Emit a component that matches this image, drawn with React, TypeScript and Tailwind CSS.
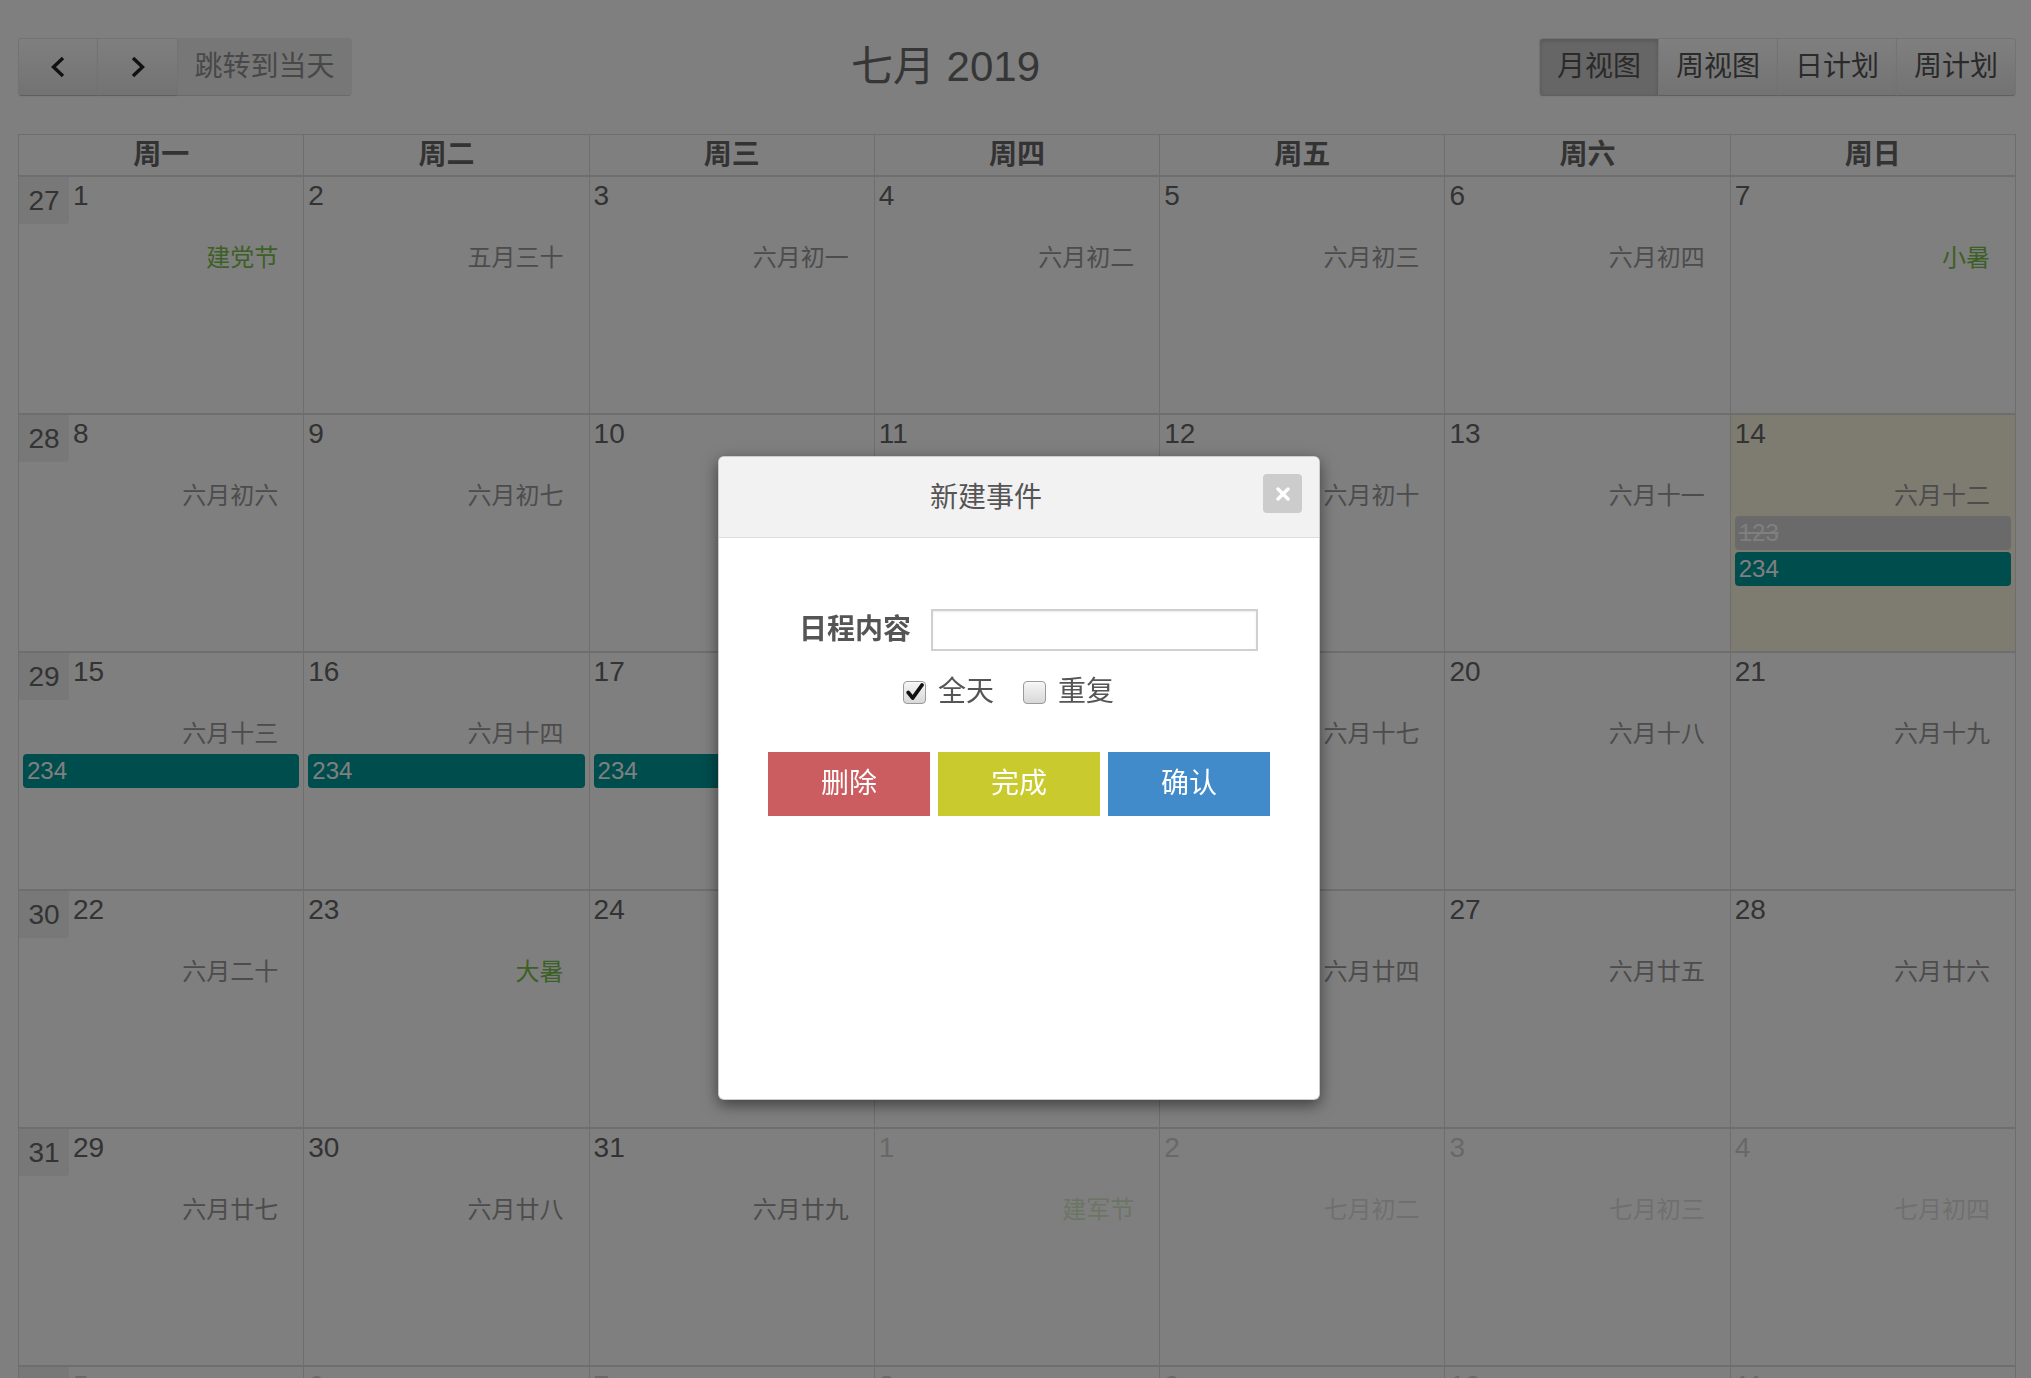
import React from "react";

type Ev = { title: string; done?: boolean };
type Day = {
  d: number;
  lunar: string;
  holiday?: boolean;
  other?: boolean;
  today?: boolean;
  events?: Ev[];
};

const weeks: { wk: number; days: Day[] }[] = [
  {
    wk: 27,
    days: [
      { d: 1, lunar: "建党节", holiday: true },
      { d: 2, lunar: "五月三十" },
      { d: 3, lunar: "六月初一" },
      { d: 4, lunar: "六月初二" },
      { d: 5, lunar: "六月初三" },
      { d: 6, lunar: "六月初四" },
      { d: 7, lunar: "小暑", holiday: true },
    ],
  },
  {
    wk: 28,
    days: [
      { d: 8, lunar: "六月初六" },
      { d: 9, lunar: "六月初七" },
      { d: 10, lunar: "六月初八" },
      { d: 11, lunar: "六月初九" },
      { d: 12, lunar: "六月初十" },
      { d: 13, lunar: "六月十一" },
      {
        d: 14,
        lunar: "六月十二",
        today: true,
        events: [{ title: "123", done: true }, { title: "234" }],
      },
    ],
  },
  {
    wk: 29,
    days: [
      { d: 15, lunar: "六月十三", events: [{ title: "234" }] },
      { d: 16, lunar: "六月十四", events: [{ title: "234" }] },
      { d: 17, lunar: "六月十五", events: [{ title: "234" }] },
      { d: 18, lunar: "六月十六" },
      { d: 19, lunar: "六月十七" },
      { d: 20, lunar: "六月十八" },
      { d: 21, lunar: "六月十九" },
    ],
  },
  {
    wk: 30,
    days: [
      { d: 22, lunar: "六月二十" },
      { d: 23, lunar: "大暑", holiday: true },
      { d: 24, lunar: "六月廿二" },
      { d: 25, lunar: "六月廿三" },
      { d: 26, lunar: "六月廿四" },
      { d: 27, lunar: "六月廿五" },
      { d: 28, lunar: "六月廿六" },
    ],
  },
  {
    wk: 31,
    days: [
      { d: 29, lunar: "六月廿七" },
      { d: 30, lunar: "六月廿八" },
      { d: 31, lunar: "六月廿九" },
      { d: 1, lunar: "建军节", holiday: true, other: true },
      { d: 2, lunar: "七月初二", other: true },
      { d: 3, lunar: "七月初三", other: true },
      { d: 4, lunar: "七月初四", other: true },
    ],
  },
  {
    wk: 32,
    days: [
      { d: 5, lunar: "七月初五", other: true },
      { d: 6, lunar: "七月初六", other: true },
      { d: 7, lunar: "七夕", holiday: true, other: true },
      { d: 8, lunar: "立秋", holiday: true, other: true },
      { d: 9, lunar: "七月初九", other: true },
      { d: 10, lunar: "七月初十", other: true },
      { d: 11, lunar: "七月十一", other: true },
    ],
  },
];

const dayNames = ["周一", "周二", "周三", "周四", "周五", "周六", "周日"];

const btnBase =
  "flex h-[58px] items-center justify-center border border-[#e6e6e6] border-b-[#bfbfbf] text-[28px] text-[#555] -ml-px first:ml-0";
const btnNormal =
  "bg-[#f5f5f5] bg-[linear-gradient(to_bottom,#ffffff,#e6e6e6)] shadow-[inset_0_1px_0_rgba(255,255,255,0.2),0_1px_2px_rgba(0,0,0,0.05)]";
const btnActive =
  "bg-[#cccccc] shadow-[inset_0_2px_4px_rgba(0,0,0,0.15),0_1px_2px_rgba(0,0,0,0.05)]";

function Cell({ day, wk, first }: { day: Day; wk: number; first: boolean }) {
  return (
    <div
      className={`h-full border-r border-[#ddd] ${day.today ? "bg-[#fcf8e3]" : ""}`}
    >
      <div className="flex h-[48px] items-start">
        {first && (
          <span className="h-[47px] w-[50px] rounded-br-[3px] bg-[rgba(208,208,208,0.3)] text-center text-[28px] leading-[47px] text-[#666]">
            {wk}
          </span>
        )}
        <span
          className={`pl-[4px] pt-[3px] text-[28px] leading-[32px] text-[#666] ${day.other ? "opacity-30" : ""}`}
        >
          {day.d}
        </span>
      </div>
      <div
        className={`mt-[16px] pr-[25px] text-right text-[24px] leading-[34px] ${day.holiday ? "text-[#79c04a]" : "text-[#999]"} ${day.other ? "opacity-30" : ""}`}
      >
        {day.lunar}
      </div>
      {day.events && (
        <div className="mt-[3px] flex flex-col gap-[2px] px-[4px]">
          {day.events.map((e, i) => (
            <div
              key={i}
              className={`h-[34px] rounded-[4px] pl-[4px] text-[24px] leading-[34px] text-white ${e.done ? "bg-[#d4d4d4] line-through" : "bg-[#009a9a]"}`}
            >
              {e.title}
            </div>
          ))}
        </div>
      )}
    </div>
  );
}

function CheckBox({ checked }: { checked?: boolean }) {
  return (
    <span className="flex h-[23px] w-[23px] items-center justify-center rounded-[4px] border border-[#9a9a9a] bg-[linear-gradient(to_bottom,#f6f6f6,#d8d8d8)] shadow-[inset_0_1px_0_rgba(255,255,255,0.6)]">
      {checked && (
        <svg viewBox="0 0 16 16" className="h-[20px] w-[20px]">
          <path
            d="M2.6 8.4 L6.2 12.8 L13.6 2.4"
            stroke="#111"
            strokeWidth="3"
            fill="none"
            strokeLinecap="round"
            strokeLinejoin="round"
          />
        </svg>
      )}
    </span>
  );
}

export default function App() {
  return (
    <div className="min-h-screen bg-white pl-[18px] pr-[15px] font-['Liberation_Sans','Noto_Sans_CJK_SC',sans-serif]">
      {/* toolbar */}
      <div className="flex items-center pt-[38px]">
        <div className="flex">
          <button className={`${btnBase} ${btnNormal} w-[80px] rounded-l-[4px]`}>
            <svg viewBox="0 0 18 22" className="h-[22px] w-[18px]">
              <polyline
                points="14,2 4.5,11 14,20"
                fill="none"
                stroke="#222"
                strokeWidth="3.4"
              />
            </svg>
          </button>
          <button className={`${btnBase} ${btnNormal} w-[81px]`}>
            <svg viewBox="0 0 18 22" className="h-[22px] w-[18px]">
              <polyline
                points="4,2 13.5,11 4,20"
                fill="none"
                stroke="#222"
                strokeWidth="3.4"
              />
            </svg>
          </button>
          <button
            className={`${btnBase} w-[175px] rounded-r-[4px] bg-[#e6e6e6] opacity-[0.65]`}
          >
            跳转到当天
          </button>
        </div>
        <div className="flex-1 text-center text-[42px] leading-[50px] text-[#6c6c6c]">
          七月 2019
        </div>
        <div className="flex">
          <button className={`${btnBase} ${btnActive} w-[120px] rounded-l-[4px]`}>
            月视图
          </button>
          <button className={`${btnBase} ${btnNormal} w-[120px]`}>周视图</button>
          <button className={`${btnBase} ${btnNormal} w-[120px]`}>日计划</button>
          <button className={`${btnBase} ${btnNormal} w-[120px] rounded-r-[4px]`}>
            周计划
          </button>
        </div>
      </div>

      {/* calendar */}
      <div className="mt-[38px] border-l border-t border-[#ddd]">
        <div className="grid grid-cols-7 border-b-2 border-[#ddd]">
          {dayNames.map((n) => (
            <div
              key={n}
              className="h-[40px] border-r border-[#ddd] text-center text-[28px] font-bold leading-[40px] text-[#666]"
            >
              {n}
            </div>
          ))}
        </div>
        {weeks.map((w) => (
          <div
            key={w.wk}
            className="grid h-[238px] grid-cols-7 border-b-2 border-[#ddd]"
          >
            {w.days.map((d, i) => (
              <Cell key={i} day={d} wk={w.wk} first={i === 0} />
            ))}
          </div>
        ))}
      </div>

      {/* backdrop */}
      <div className="fixed inset-0 z-40 bg-black/50" />

      {/* modal */}
      <div className="fixed left-[718px] top-[456px] z-50 h-[644px] w-[602px] overflow-hidden rounded-[6px] border border-black/20 bg-white shadow-[0_5px_15px_rgba(0,0,0,0.5)]">
        <div className="flex h-[81px] items-start border-b border-[#ddd] bg-[#f2f2f2]">
          <div className="flex-1 pr-[10px] text-center text-[28px] leading-[82px] text-[#555]">
            新建事件
          </div>
          <button className="mr-[17px] mt-[17px] flex h-[39px] w-[39px] items-center justify-center rounded-[4px] bg-[#cccccc]">
            <svg viewBox="0 0 14 14" className="h-[14px] w-[14px]">
              <path
                d="M2 2 L12 12 M12 2 L2 12"
                stroke="#fff"
                strokeWidth="3.4"
                strokeLinecap="round"
              />
            </svg>
          </button>
        </div>
        <div className="pt-[71px]">
          <div className="flex h-[42px] items-center pl-[80px]">
            <span className="w-[112px] text-[28px] font-bold text-[#555]">
              日程内容
            </span>
            <input
              type="text"
              className="ml-[20px] h-[42px] w-[327px] border-2 border-[#d0d0d0] bg-white shadow-[inset_0_1px_2px_rgba(0,0,0,0.08)] outline-none"
            />
          </div>
          <div className="mt-[27px] flex h-[28px] items-center pl-[184px] text-[28px] leading-[28px] text-[#555]">
            <CheckBox checked />
            <span className="ml-[12px]">全天</span>
            <span className="ml-[29px]">
              <CheckBox />
            </span>
            <span className="ml-[12px]">重复</span>
          </div>
          <div className="mt-[46px] flex justify-center gap-[8px]">
            <button className="h-[64px] w-[162px] bg-[#cb5c5f] text-[28px] text-white">
              删除
            </button>
            <button className="h-[64px] w-[162px] bg-[#c8ca2d] text-[28px] text-white">
              完成
            </button>
            <button className="h-[64px] w-[162px] bg-[#418bca] text-[28px] text-white">
              确认
            </button>
          </div>
        </div>
      </div>
    </div>
  );
}
